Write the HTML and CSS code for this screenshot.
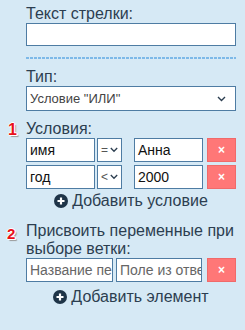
FILE: index.html
```html
<!DOCTYPE html>
<html>
<head>
<meta charset="utf-8">
<link rel="stylesheet" href="styles.css">
</head>
<body>
<div class="panel">
  <div class="label first">Текст стрелки:</div>
  <div class="input big"></div>
  <div class="sep"></div>
  <div class="label">Тип:</div>
  <div class="select-wide">
    <span>Условие "ИЛИ"</span>
    <svg class="chev" width="9" height="6" viewBox="0 0 9 6"><path d="M1 1 L4.5 4.5 L8 1" fill="none" stroke="#2c3e50" stroke-width="1.4"/></svg>
  </div>
  <div class="label sec"><span class="badge">1</span>Условия:</div>
  <div class="cond-row">
    <div class="input cell c1">имя</div>
    <div class="input op"><span>=</span><svg width="8" height="6" viewBox="0 0 8 6"><path d="M0.8 1 L4 4.3 L7.2 1" fill="none" stroke="#2c3e50" stroke-width="1.3"/></svg></div>
    <div class="input cell c3">Анна</div>
    <div class="del">×</div>
  </div>
  <div class="cond-row">
    <div class="input cell c1">год</div>
    <div class="input op"><span>&lt;</span><svg width="8" height="6" viewBox="0 0 8 6"><path d="M0.8 1 L4 4.3 L7.2 1" fill="none" stroke="#2c3e50" stroke-width="1.3"/></svg></div>
    <div class="input cell c3">2000</div>
    <div class="del">×</div>
  </div>
  <div class="add">
    <svg width="14" height="14" viewBox="0 0 14 14"><circle cx="7" cy="7" r="7" fill="#1e3448"/><path d="M7 3.5 V10.5 M3.5 7 H10.5" stroke="#fff" stroke-width="2.2"/></svg>
    <span>Добавить условие</span>
  </div>
  <div class="label sec two"><span class="badge b2">2</span>Присвоить переменные при выборе ветки:</div>
  <div class="assign-row">
    <div class="input cell ph a1">Название пе</div>
    <div class="input cell ph a2">Поле из отве</div>
    <div class="del">×</div>
  </div>
  <div class="add last">
    <svg width="14" height="14" viewBox="0 0 14 14"><circle cx="7" cy="7" r="7" fill="#1e3448"/><path d="M7 3.5 V10.5 M3.5 7 H10.5" stroke="#fff" stroke-width="2.2"/></svg>
    <span>Добавить элемент</span>
  </div>
</div>
</body>
</html>
```
FILE: styles.css
```css
html, body {
  margin: 0;
  padding: 0;
  background: #d6e9f5;
}
.panel {
  width: 210px;
  padding: 5px 0 0 26px;
  font-family: "Liberation Sans", Arial, sans-serif;
  color: #2c3e50;
}
.label {
  font-size: 16px;
  line-height: 18px;
  position: relative;
}
.label.sec {
  margin-top: 9px;
}
.label.two {
  margin-top: 12px;
}
.badge {
  position: absolute;
  left: -18px;
  top: 1px;
  font-weight: bold;
  font-size: 16px;
  color: #e8101a;
  text-shadow: 1px 0 0 #fff, -1px 0 0 #fff, 0 1px 0 #fff, 0 -1px 0 #fff, 1px 1px 0 #fff, 2px 2px 1px #999;
}
.badge.b2 {
  top: 3px;
  left: -19px;
  font-size: 15px;
}
.input {
  box-sizing: border-box;
  background: #fff;
  border: 1px solid #4e7ca3;
  font-size: 14px;
  color: #111;
}
.input.big {
  height: 23px;
}
.sep {
  margin-top: 11px;
  height: 2px;
  background: repeating-linear-gradient(to right, #7db9e8 0 3px, transparent 3px 4px);
}
.sep + .label {
  margin-top: 9px;
}
.select-wide {
  box-sizing: border-box;
  height: 25px;
  background: #fff;
  border: 1px solid #4e7ca3;
  display: flex;
  align-items: center;
  justify-content: space-between;
  padding: 0 9px 0 3px;
  font-size: 13px;
  color: #444;
}
.cond-row {
  display: flex;
  height: 24px;
  margin-bottom: 3px;
}
.cond-row .c1 {
  width: 69px;
}
.cond-row .op {
  width: 25px;
  margin-left: 2px;
}
.cond-row .c3 {
  width: 69px;
  margin-left: 12px;
}
.cond-row .del {
  margin-left: 4px;
}
.cell {
  display: flex;
  align-items: center;
  padding: 0 3px;
  white-space: nowrap;
  overflow: hidden;
  flex: none;
}
.op {
  box-sizing: border-box;
  display: flex;
  align-items: center;
  gap: 2px;
  padding-left: 3px;
  color: #555;
  flex: none;
  overflow: hidden;
}
.op span {
  font-size: 12px;
}
.del {
  width: 29px;
  flex: none;
  background: #ff7777;
  border: 1px solid #f06a6a;
  box-sizing: border-box;
  color: #fff;
  font-size: 12px;
  font-weight: bold;
  display: flex;
  align-items: center;
  justify-content: center;
}
.ph {
  color: #666;
}
.assign-row {
  display: flex;
  height: 24px;
}
.assign-row .a1 {
  width: 87px;
}
.assign-row .a2 {
  width: 86px;
  margin-left: 3px;
}
.assign-row .del {
  margin-left: 5px;
}
.add {
  display: flex;
  align-items: center;
  justify-content: center;
  gap: 4px;
  font-size: 16px;
  line-height: 18px;
  margin-top: 3px;
}
.add.last {
  margin-top: 6px;
}
```
